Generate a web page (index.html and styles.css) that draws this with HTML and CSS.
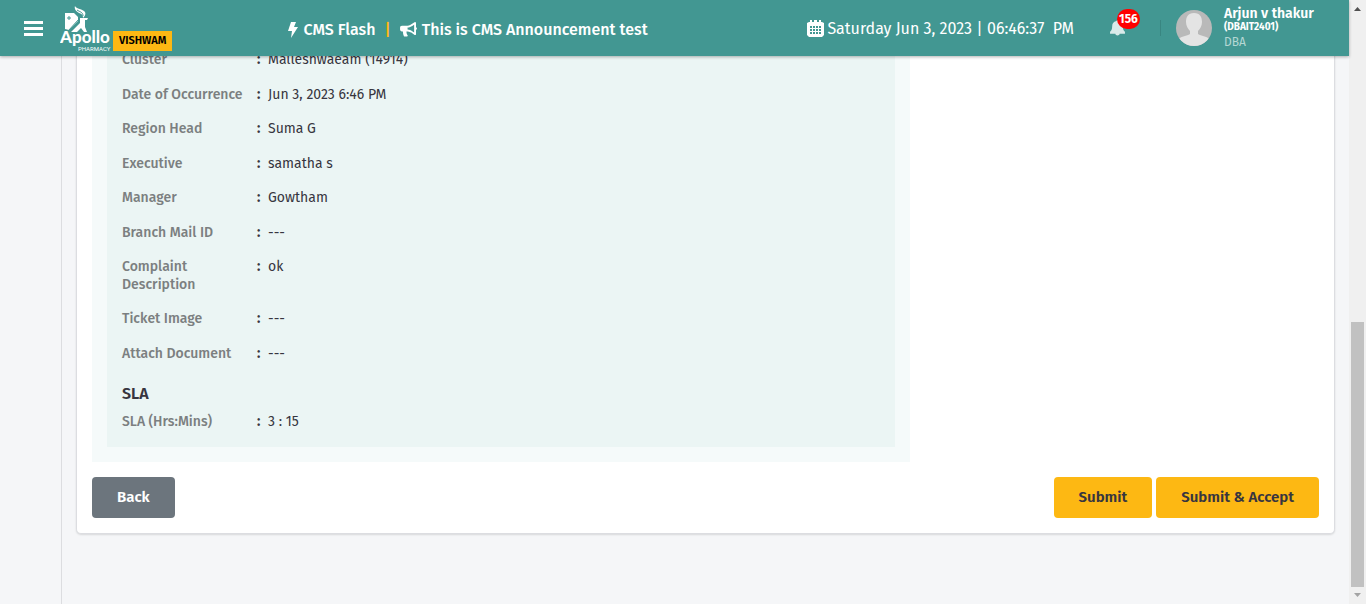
FILE: index.html
```
<!DOCTYPE html>
<html lang="en">
<head>
<meta charset="utf-8">
<title>Apollo Pharmacy Vishwam</title>
<link rel="stylesheet" href="styles.css">
</head>
<body>
<div class="viewport">
  <div class="page">
    <header class="topbar">
      <button class="menu" type="button" aria-label="Menu"><span></span><span></span><span></span></button>
      <a class="brand" href="#" aria-label="Apollo Pharmacy Vishwam">
        <svg class="logo" viewBox="0 0 52 48" aria-hidden="true">
          <path fill="#fff" d="M5 7h9l4 4v4l-9 9-4-1z"/>
          <path stroke="#429792" stroke-width="1" d="M9 10v4M7 12h4" fill="none"/>
          <path fill="#fff" d="M15 0c1 3 8 3 10 6 1 2 0 4-2 6 0-3-1-4-4-5-3-2-5-4-4-7zM20 12h8l-1 2h-2v7l2 5h-3l-3-4-4 4h-6l9-9z"/>
          <path stroke="#429792" stroke-width="1" d="M19 13 8 25M17 4c3 2 6 2 6 6" fill="none"/>
          <text class="logo-name" x="0" y="37">Apollo</text>
          <text class="logo-sub" x="18" y="45">PHARMACY</text>
        </svg>
        <span class="product">VISHWAM</span>
      </a>
      <div class="ticker">
        <svg class="icon-bolt" viewBox="0 0 10 16" aria-hidden="true"><path d="M3 0h5L6 5h4L3 16l1-7H0z"/></svg>
        <span>CMS Flash</span>
        <span class="bar">|</span>
        <svg class="icon-horn" viewBox="0 0 18 16" aria-hidden="true"><path fill-rule="evenodd" d="M16 0c.6 0 1 .4 1 1v4.500c1.300.7 1.300 2.300 0 3V13c0 .8-.8 1.200-1.500.8L12 11.300c-1.600-1-3.400-1.300-5.200-1.300.1 1.800.4 3 1.200 4 .5.700.1 1.500-.7 1.500H5c-.5 0-.8-.2-1-.6C3.300 13.400 3 11.800 3.100 10H2C.8 10 0 9.200 0 8V6c0-1.200.8-2 2-2h4.500c2 0 3.900-.5 5.500-1.700L15.400.2zM15 2.800 13 4.200C11.500 5.200 10 5.700 8 5.900v2.200c2 .2 3.500.7 5 1.700l2 1.400z"/></svg>
        <span>This is CMS Announcement test</span>
      </div>
      <div class="clock">
        <svg class="icon-cal" viewBox="0 0 17 17" aria-hidden="true"><path d="M3 0h2v2h2V0h3v2h2V0h2v2h1l2 1v12l-2 2H2l-2-2V3l2-1h1z"/><path fill="#429792" d="M3 6h2v2H3zm3 0h2v2H6zm3 0h2v2H9zm3 0h2v2h-2zM3 9h2v2H3zm3 0h2v2H6zm3 0h2v2H9zm3 0h2v2h-2zM3 12h2v2H3zm3 0h2v2H6zm3 0h2v2H9zm3 0h2v2h-2z"/></svg>
        <time datetime="2023-06-03T18:46:37">Saturday Jun 3, 2023 | 06:46:37&nbsp; PM</time>
      </div>
      <button class="bell" type="button" aria-label="Notifications">
        <svg class="icon-bell" viewBox="0 0 14 15" aria-hidden="true"><path d="M6 1c0-1 2-1 2 0 3 .6 4 2.500 4 5 0 3 1 4 2 5v2H0v-2c1-1 2-2 2-5 0-2.500 1-4.400 4-5zM5 13h4c0 2-4 2-4 0z"/></svg>
        <span class="badge">156</span>
      </button>
      <div class="profile">
        <svg class="avatar" viewBox="0 0 36 36" aria-hidden="true">
          <defs><clipPath id="round"><circle cx="18" cy="18" r="18"/></clipPath></defs>
          <g clip-path="url(#round)"><path fill="#b9b9b9" d="M0 0h36v36H0z"/><path fill="#e4e4e4" d="M18 3c6 0 8 4 8 9 0 4-2 7-4 9v3c3 2 9 2 11 5v9H3v-9c2-3 8-3 11-5v-3c-2-2-4-5-4-9 0-5 2-9 8-9z"/></g>
        </svg>
        <div class="who"><strong>Arjun v thakur</strong><b>(DBAIT2401)</b><span>DBA</span></div>
      </div>
    </header>
    <div class="shell">
      <aside class="rail"></aside>
      <main class="content">
        <section class="card">
          <div class="panel">
            <div class="details">
              <dl>
                <div><dt>Cluster</dt><dd>Malleshwaeam (14914)</dd></div>
                <div><dt>Date of Occurrence</dt><dd>Jun 3, 2023 6:46 PM</dd></div>
                <div><dt>Region Head</dt><dd>Suma G</dd></div>
                <div><dt>Executive</dt><dd>samatha s</dd></div>
                <div><dt>Manager</dt><dd>Gowtham</dd></div>
                <div><dt>Branch Mail ID</dt><dd>---</dd></div>
                <div><dt>Complaint Description</dt><dd>ok</dd></div>
                <div><dt>Ticket Image</dt><dd>---</dd></div>
                <div><dt>Attach Document</dt><dd>---</dd></div>
              </dl>
              <h2>SLA</h2>
              <dl>
                <div><dt>SLA (Hrs:Mins)</dt><dd>3 : 15</dd></div>
              </dl>
            </div>
          </div>
          <div class="actions">
            <button class="btn back" type="button">Back</button>
            <button class="btn" type="button">Submit</button>
            <button class="btn" type="button">Submit &amp; Accept</button>
          </div>
        </section>
      </main>
    </div>
  </div>
  <div class="scrollbar" aria-hidden="true">
    <svg viewBox="0 0 17 17"><path fill="#505050" d="M5 11h7L8.500 7z"/></svg>
    <div class="track"><div class="thumb"></div></div>
    <svg viewBox="0 0 17 17"><path fill="#a3a3a3" d="M5 6h7l-3.500 4z"/></svg>
  </div>
</div>
</body>
</html>
```
FILE: styles.css
```
* { box-sizing: border-box; }
body {
  margin: 0;
  background: #f5f6f8;
  color: #37353f;
  font: 14px/1.25 "Fira Sans", Roboto, "Noto Sans", sans-serif;
}
button { font: inherit; border: 0; padding: 0; background: none; cursor: pointer; }
svg { display: block; flex: none; }
.viewport { display: flex; height: 100vh; overflow: hidden; }
.page { flex: 1; min-width: 0; position: relative; }

.topbar {
  position: absolute;
  top: 0;
  left: 0;
  right: 0;
  z-index: 1;
  display: flex;
  align-items: center;
  height: 56px;
  padding-left: 24px;
  background: #429792;
  color: #fff;
  fill: #fff;
  box-shadow: 0 1px 3px rgba(0, 0, 0, .3);
}
.menu { display: grid; gap: 3px; width: 19px; }
.menu span { height: 3px; background: #fff; }
.brand { display: flex; align-items: flex-end; gap: 1px; margin-left: 17px; color: #000; text-decoration: none; }
.logo { width: 52px; height: 48px; margin-top: 4px; }
.logo-name { font: 900 17px Lato, sans-serif; }
.logo-sub { font: 6px Roboto, sans-serif; }
.product { margin-bottom: 3px; padding: 0 6px; background: #fdb813; font-size: 11px; font-weight: 600; line-height: 20px; }
.ticker { display: flex; align-items: center; margin-left: 116px; padding-top: 3px; font-size: 16px; font-weight: 500; white-space: nowrap; }
.icon-bolt { width: 10px; height: 16px; margin-right: 5px; }
.icon-horn { width: 17px; height: 15px; margin-right: 5px; }
.bar { margin: 0 9px; color: #fdb813; }
.clock { display: flex; align-items: center; gap: 3px; margin-left: auto; padding-top: 1px; font-size: 16px; font-weight: 400; white-space: nowrap; }
.icon-cal { width: 17px; height: 17px; }
.bell { position: relative; width: 51px; height: 16px; margin-left: 36px; border-right: 1px solid #398681; }
.icon-bell { width: 15px; height: 16px; fill: #d9eae9; }
.badge {
  position: absolute;
  top: -11px;
  left: 7px;
  min-width: 23px;
  border-radius: 10px;
  background: #f00;
  color: #fff;
  font-size: 12px;
  font-weight: 700;
  line-height: 20px;
}
.profile { display: flex; align-items: center; gap: 12px; width: 188px; padding-left: 15px; }
.avatar { width: 36px; height: 36px; }
.who { display: grid; line-height: 15px; }
.who strong { font-size: 14px; font-weight: 600; }
.who b { font-size: 10px; line-height: 13px; }
.who span { font-size: 12px; color: #b5d7d4; line-height: 17px; }

.shell { display: flex; height: 100%; }
.rail { width: 62px; flex: none; border-right: 1px solid #dcdde0; }
.content { flex: 1; padding: 0 14px; }
.card {
  padding: 0 15px 15px;
  border: 1px solid #dcdde1;
  border-top: 0;
  border-radius: 0 0 5px 5px;
  background: #fff;
  box-shadow: 0 1px 2px rgba(0, 0, 0, .12);
}
.panel { width: 66.67%; padding: 0 15px 15px; background: #f5fafa; }
.details { padding: 51px 15px 16px; background: #ebf5f4; }
dl { margin: 0; display: grid; gap: 17px; }
dl > div { display: grid; grid-template-columns: 135px 1fr; }
dt { color: #7b7f80; font-weight: 500; }
dd { display: flex; margin: 0; }
dd::before { content: ":"; width: 11px; flex: none; font-weight: 700; }
h2 { margin: 22px 0 9px; font-size: 16px; line-height: 20px; font-weight: 600; }
.actions { display: flex; gap: 4px; padding-top: 15px; }
.btn { padding: 0 25px; border-radius: 4px; background: #fdb813; color: #37353f; font-size: 15px; font-weight: 600; line-height: 41px; }
.btn.back { margin-right: auto; background: #6c757d; color: #fff; }

.scrollbar { display: flex; flex-direction: column; width: 17px; background: #f0f0f0; }
.track { flex: 1; display: flex; flex-direction: column; justify-content: flex-end; padding: 0 2px; }
.thumb { height: 46.500%; background: #c1c1c1; }
```
